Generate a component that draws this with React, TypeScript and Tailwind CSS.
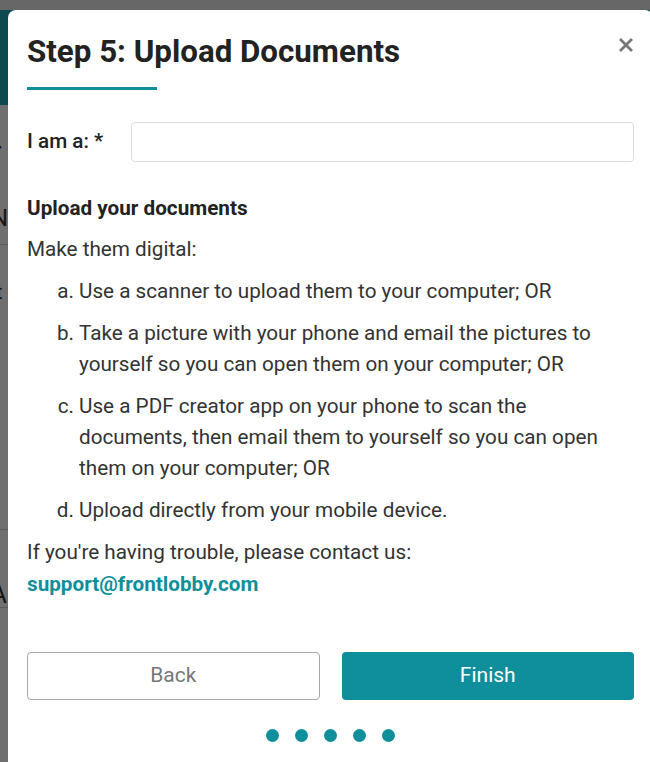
import React from "react";

const TEAL = "#0f8f9b";

const steps = [
  "Use a scanner to upload them to your computer; OR",
  "Take a picture with your phone and email the pictures to yourself so you can open them on your computer; OR",
  "Use a PDF creator app on your phone to scan the documents, then email them to yourself so you can open them on your computer; OR",
  "Upload directly from your mobile device.",
];

function BackdropPage() {
  // the page behind the dialog, dimmed; only a thin strip of it shows
  return (
    <div className="flex h-full w-full flex-col bg-[#6f6f6f]">
      <div className="h-[10px] bg-[#676767]" />
      <div className="h-[95px] bg-[#0c4a50]" />
      <div className="relative flex-1 text-[#161616]" style={{ fontFamily: "Roboto, sans-serif" }}>
        <span className="absolute left-[-6px] top-[30px] text-[20px] font-bold">r</span>
        <span className="absolute left-[-9px] top-[95px] text-[24px]">N</span>
        <div className="absolute left-0 top-[139px] h-px w-[8px] bg-[#5a5a5a]" />
        <span className="absolute left-[-4px] top-[172px] text-[20px]">t</span>
        <div className="absolute left-0 top-[424px] h-px w-[8px] bg-[#5a5a5a]" />
        <span className="absolute left-[-10px] top-[470px] text-[26px]">A</span>
        <div className="absolute left-0 top-[502px] h-px w-[8px] bg-[#5a5a5a]" />
      </div>
    </div>
  );
}

export default function App() {
  return (
    <div className="relative h-[762px] w-[650px] overflow-hidden">
      <BackdropPage />

      {/* dialog */}
      <div
        className="absolute left-[8px] top-[10px] h-[790px] w-[645px] rounded-lg bg-white px-[19px] pt-[24px] text-[#333]"
        style={{ fontFamily: "Roboto, 'Noto Sans', sans-serif" }}
      >
        <button
          type="button"
          className="absolute left-[610px] top-[27px] flex h-[16px] w-[16px] items-center justify-center text-[#777]"
          aria-label="Close"
        >
          <svg width="14" height="14" viewBox="0 0 14 14">
            <path d="M2 2 L12 12 M12 2 L2 12" stroke="currentColor" strokeWidth="2.8" strokeLinecap="square" />
          </svg>
        </button>

        <h2 className="text-[31.3px] font-bold leading-[36px] text-[#222]">Step 5: Upload Documents</h2>
        <div className="mt-[17px] h-[3px] w-[130px]" style={{ backgroundColor: TEAL }} />

        <div className="mt-[32px] flex items-center">
          <label className="w-[104px] shrink-0 text-[20.7px] font-medium text-[#222]">I am a: *</label>
          <input
            type="text"
            className="h-[40px] flex-1 rounded-[4px] border border-[#dcdcdc] bg-white px-3 text-[18px] outline-none"
          />
        </div>

        <p className="mt-[31px] text-[20.7px] font-bold leading-[31px] text-[#222]">Upload your documents</p>
        <p className="mt-[10px] text-[20.7px] leading-[31px]">Make them digital:</p>

        <ol className="mt-[11px] flex flex-col gap-[11px] text-[20.7px] leading-[31px]">
          {steps.map((s, i) => (
            <li key={i} className="flex">
              <span className="w-[52px] shrink-0 pr-[5px] text-right">{"abcd"[i]}.</span>
              <span className="pr-[10px]">{s}</span>
            </li>
          ))}
        </ol>

        <p className="mt-[10px] text-[20.7px] leading-[32px]">If you're having trouble, please contact us:</p>
        <a className="block text-[20.7px] font-bold leading-[32px]" style={{ color: TEAL }}>
          support@frontlobby.com
        </a>

        <div className="mt-[52px] grid grid-cols-2 gap-[22px]">
          <button
            type="button"
            className="h-[48px] rounded-[4px] border border-[#a8a8a8] bg-white text-[21px] text-[#777]"
          >
            Back
          </button>
          <button
            type="button"
            className="h-[48px] rounded-[4px] text-[21px] text-white"
            style={{ backgroundColor: TEAL }}
          >
            Finish
          </button>
        </div>

        <div className="mt-[29px] flex justify-center gap-[16px]">
          {[0, 1, 2, 3, 4].map((i) => (
            <span key={i} className="h-[13px] w-[13px] rounded-full" style={{ backgroundColor: TEAL }} />
          ))}
        </div>
      </div>
    </div>
  );
}
